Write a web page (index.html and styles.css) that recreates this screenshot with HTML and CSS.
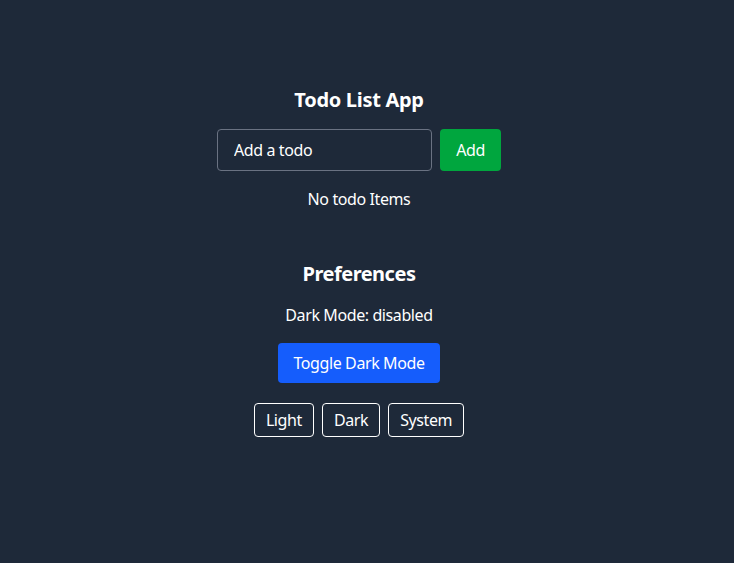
FILE: index.html
```html
<!DOCTYPE html>
<html lang="en">
<head>
<meta charset="utf-8">
<title>Todo List App</title>
<link rel="stylesheet" href="styles.css">
</head>
<body>
<main class="app">
  <section class="todo">
    <h1 class="title">Todo List App</h1>
    <form class="add-form">
      <input class="todo-input" type="text" placeholder="Add a todo">
      <button class="btn-add" type="button">Add</button>
    </form>
    <p class="empty">No todo Items</p>
  </section>
  <section class="prefs">
    <h2 class="title">Preferences</h2>
    <p class="status">Dark Mode: disabled</p>
    <button class="btn-toggle" type="button">Toggle Dark Mode</button>
    <div class="theme-row">
      <button class="btn-theme" type="button">Light</button>
      <button class="btn-theme" type="button">Dark</button>
      <button class="btn-theme" type="button">System</button>
    </div>
  </section>
</main>
</body>
</html>
```
FILE: styles.css
```css
html, body {
  margin: 0;
  padding: 0;
  background: #1e2939;
  height: 100%;
}
body {
  font-family: "Noto Sans", "Open Sans", sans-serif;
  color: #ffffff;
  font-size: 16px;
  letter-spacing: -0.4px;
}
.app {
  display: flex;
  flex-direction: column;
  align-items: center;
  padding-top: 86px;
  padding-right: 16px;
}
.todo, .prefs {
  display: flex;
  flex-direction: column;
  align-items: center;
}
.title {
  margin: 0;
  font-size: 20px;
  line-height: 28px;
  font-weight: 700;
  letter-spacing: -0.3px;
}
.prefs .title { letter-spacing: -0.5px; }
.todo .title { margin-bottom: 15px; }
.add-form {
  display: flex;
  gap: 8px;
  margin: 0;
}
.todo-input {
  box-sizing: border-box;
  width: 215px;
  height: 42px;
  padding: 0 16px;
  border: 1px solid #6a7282;
  border-radius: 4px;
  background: transparent;
  color: #fff;
  font: inherit;
  letter-spacing: inherit;
  outline: none;
}
.todo-input::placeholder { color: #ffffff; opacity: 1; }
.btn-add {
  box-sizing: border-box;
  width: 61px;
  height: 42px;
  border: none;
  border-radius: 4px;
  background: #00a63e;
  color: #fff;
  font: inherit;
  letter-spacing: inherit;
  padding: 0;
}
.empty {
  margin: 16px 0 0;
  line-height: 24px;
}
.prefs { margin-top: 49px; }
.status {
  margin: 15px 0 0;
  line-height: 24px;
}
.btn-toggle {
  margin-top: 16px;
  box-sizing: border-box;
  width: 162px;
  height: 40px;
  border: none;
  border-radius: 4px;
  background: #155dfc;
  color: #fff;
  font: inherit;
  letter-spacing: inherit;
  padding: 0;
}
.theme-row {
  display: flex;
  gap: 8px;
  margin-top: 20px;
}
.btn-theme {
  box-sizing: border-box;
  height: 34px;
  padding: 0 11px;
  border: 1px solid #ffffff;
  border-radius: 4px;
  background: transparent;
  color: #fff;
  font: inherit;
  letter-spacing: inherit;
}
```
